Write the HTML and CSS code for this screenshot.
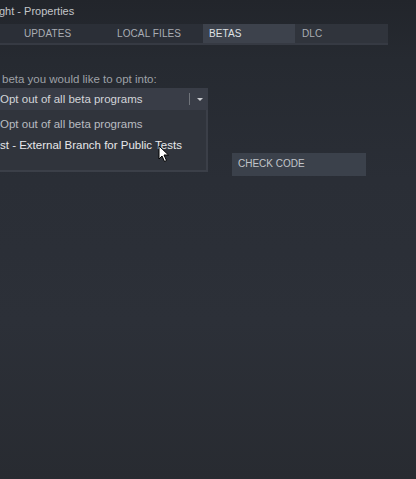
FILE: index.html
```html
<!DOCTYPE html>
<html>
<head>
<meta charset="utf-8">
<link rel="stylesheet" href="styles.css">
</head>
<body>
<div class="window">
  <div class="title">ght - Properties</div>
  <div class="tabs">
    <div class="tab t1">UPDATES</div>
    <div class="tab t2">LOCAL FILES</div>
    <div class="tab t3 active">BETAS</div>
    <div class="tab t4">DLC</div>
  </div>
  <div class="content">
    <div class="label">beta you would like to opt into:</div>
    <div class="row">
      <div class="dropwrap">
        <div class="select">
          <span class="selval">Opt out of all beta programs</span>
          <span class="sep"></span>
          <span class="arrow"></span>
        </div>
        <div class="list">
          <div class="item">Opt out of all beta programs</div>
          <div class="item hover">st - External Branch for Public Tests</div>
        </div>
        <svg class="cursor" width="12" height="18" viewBox="0 0 12 18"><path d="M1 1 L1 14 L4 11 L6.5 16.5 L8.5 15.5 L6 10 L10.5 10 Z" fill="#fff" stroke="#000" stroke-width="1"/></svg>
      </div>
      <div class="btn">CHECK CODE</div>
    </div>
  </div>
</div>
</body>
</html>
```
FILE: styles.css
```css
html, body { margin: 0; padding: 0; }
body {
  width: 416px;
  height: 479px;
  overflow: hidden;
  background: linear-gradient(#22252b 0px, #262a31 60px, #2a2e36 180px, #2c3038 320px, #282b31 479px);
  font-family: "Liberation Sans", Arial, sans-serif;
  color: #c4c6ca;
}
.window { display: flex; flex-direction: column; }
.title {
  height: 24px;
  line-height: 22px;
  font-size: 11px;
  color: #c3c5c9;
  margin-left: -1px;
}
.tabs {
  display: flex;
  width: 388px;
  height: 19px;
  background: #2b2f37;
  border-bottom: 2px solid #363a43;
}
.tab {
  font-size: 10px;
  line-height: 19px;
  color: #a9adb3;
  letter-spacing: 0.1px;
}
.t1 { width: 103px; padding-left: 24px; box-sizing: border-box; }
.t2 { width: 100px; padding-left: 14px; box-sizing: border-box; }
.t3 { width: 92px; padding-left: 6px; box-sizing: border-box; }
.t4 { width: 93px; padding-left: 7px; box-sizing: border-box; background: #30343c; }
.tab.active { background: #3d424c; color: #dfe1e4; }
.content { padding-top: 27px; }
.label {
  font-size: 11.5px;
  color: #9ea1a7;
  padding-left: 2px;
  height: 16px;
  line-height: 14px;
}
.row { display: flex; align-items: flex-start; }
.dropwrap { position: relative; width: 208px; }
.select {
  height: 22px;
  background: #393d47;
  display: flex;
  align-items: center;
  font-size: 11.5px;
  color: #d3d5d9;
}
.selval { flex: 1; }
.sep { width: 1px; height: 12px; background: #6f737a; margin-right: 7px; }
.arrow {
  width: 0; height: 0;
  border-left: 3px solid transparent;
  border-right: 3px solid transparent;
  border-top: 3px solid #c9cbcf;
  margin-right: 5px;
}
.list {
  height: 62px;
  background: #30343c;
  border-right: 2px solid #3b3f48;
  border-bottom: 2px solid #3b3f48;
  box-sizing: border-box;
  padding-top: 7px;
}
.item {
  font-size: 11.5px;
  line-height: 14px;
  height: 21px;
  color: #b9bcc1;
}
.item.hover { color: #e6e7ea; }
.cursor { position: absolute; left: 158px; top: 57px; }
.btn {
  margin-left: 24px;
  margin-top: 65px;
  width: 134px;
  height: 23px;
  background: #3b414b;
  font-size: 10px;
  line-height: 22px;
  color: #c2c5ca;
  padding-left: 6px;
  box-sizing: border-box;
}
```
